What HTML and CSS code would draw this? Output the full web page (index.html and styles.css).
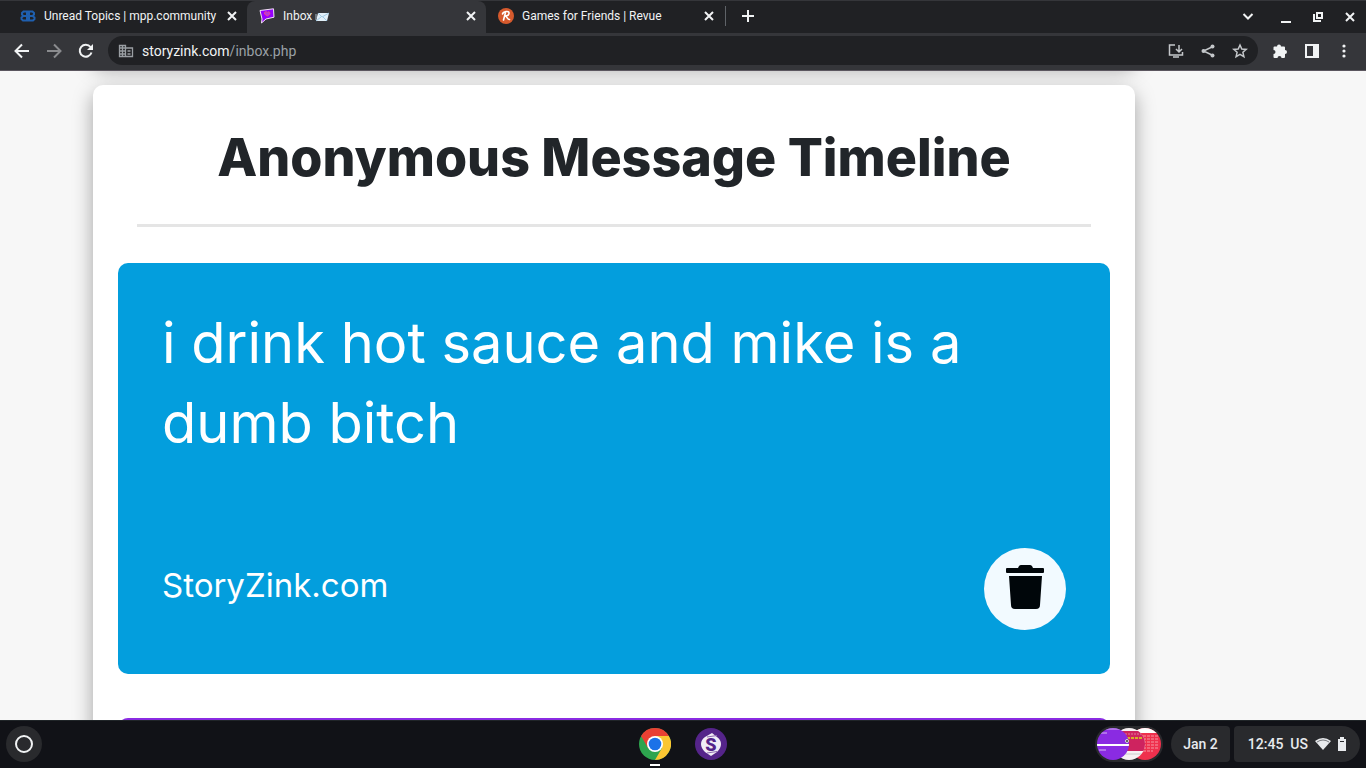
FILE: index.html
```html
<!DOCTYPE html>
<html lang="en">
<head>
    <meta charset="UTF-8">
    <meta name="viewport" content="width=device-width, initial-scale=1.0">
    <title>Inbox</title>
    <link rel="stylesheet" href="styles.css">
</head>
<body>
    <header class="browser">
        <div class="tab-strip">
            <div class="tab">
                <svg class="favicon" viewBox="0 0 16 16" fill="none" stroke="#1f5fae" stroke-width="2">
                    <path d="M7 3.500H3.500L2 5v1.500L3.500 8 1.500 9.500V11L3 12.500h4zM3.500 8H7M9 3.500h3.500L14 5v1.500L12.500 8l2 1.500V11L13 12.500H9zM12.500 8H9"/>
                </svg>
                <span class="tab-title">Unread Topics | mpp.community</span>
                <button class="tab-close" aria-label="Close tab"><svg viewBox="0 0 16 16"><path d="M4 4l8 8M12 4l-8 8"/></svg></button>
            </div>
            <div class="tab tab-active">
                <svg class="favicon" viewBox="0 0 16 16">
                    <path d="M1 2.500L14.500 .8l.5 8.400-8 1.800L2.500 15l.5-4z" fill="#9500ff" stroke="#f3e3f5" stroke-linejoin="round"/>
                    <path d="M8.500 8L5.500 6C5 3.500 7.500 3 8.300 4.500c1-1.500 3-.500 2.500 1.500z" fill="#b23ae0" stroke="#f1438b"/>
                </svg>
                <span class="tab-title">Inbox
                    <svg class="envelope" viewBox="0 0 14 12">
                        <path d="M3 2h11l-2 8H1z" fill="#e2eff8"/>
                        <path d="M3 2l4 4 7-4M1 10l5-4M12 10L8 6" fill="none" stroke="#8fc0de" stroke-width=".8"/>
                        <path d="M0 4h2M0 6h2M0 8h1" stroke="#a6b8c6"/>
                    </svg>
                </span>
                <button class="tab-close" aria-label="Close tab"><svg viewBox="0 0 16 16"><path d="M4 4l8 8M12 4l-8 8"/></svg></button>
            </div>
            <div class="tab">
                <svg class="favicon" viewBox="0 0 16 16">
                    <circle cx="8" cy="8" r="8" fill="#d65a2d"/>
                    <path d="M4.500 6C5 3.500 11.500 2 11 5.500 10.800 7.500 8.500 8 7 8c2 0 2.500 4 4.500 3.500M7.500 4.500L5.500 12" fill="none" stroke="#fff" stroke-width="1.600" stroke-linecap="round"/>
                </svg>
                <span class="tab-title">Games for Friends | Revue</span>
                <button class="tab-close" aria-label="Close tab"><svg viewBox="0 0 16 16"><path d="M4 4l8 8M12 4l-8 8"/></svg></button>
            </div>
            <div class="tab-separator"></div>
            <button class="new-tab" aria-label="New tab"><svg viewBox="0 0 16 16"><path d="M8 2v12M2 8h12"/></svg></button>
            <div class="window-controls">
                <button aria-label="Search tabs"><svg viewBox="0 0 16 16"><path d="M3.500 5L8 9.500 12.500 5"/></svg></button>
                <button aria-label="Minimize"><svg viewBox="0 0 16 16"><path d="M3 13h10"/></svg></button>
                <button aria-label="Restore"><svg viewBox="0 0 16 16"><path d="M7 4h5v5H7zM4 5v7h7"/></svg></button>
                <button aria-label="Close window"><svg viewBox="0 0 16 16"><path d="M4 4l8 8M12 4l-8 8"/></svg></button>
            </div>
        </div>
        <div class="toolbar">
            <div class="nav-buttons">
                <button aria-label="Back"><svg viewBox="0 0 16 16"><path d="M15 8H2M8 1.500L1.500 8 8 14.500"/></svg></button>
                <button class="dim" aria-label="Forward"><svg viewBox="0 0 16 16"><path d="M1 8h13M8 1.500L14.500 8 8 14.500"/></svg></button>
                <button aria-label="Reload"><svg viewBox="0 0 16 16"><path d="M13.500 9.500A6 6 0 1 1 12.500 4"/><path d="M15 1v6H9z" fill="#f1f3f4" stroke="none"/></svg></button>
            </div>
            <div class="address-bar">
                <svg viewBox="0 0 16 16" fill="none" stroke="#9a9ea3" stroke-width="1.300">
                    <path d="M1.500 2.500h6v11h-6zM7.500 5h7v8.500h-7M4.500 2.500v11M1.500 5h6M1.500 8h6M1.500 11h6M9.500 8h3M9.500 11h3"/>
                </svg>
                <div class="url" role="textbox" aria-label="Address" tabindex="0">storyzink.com<span>/inbox.php</span></div>
                <button aria-label="Install"><svg viewBox="0 0 16 16"><path d="M7 2H1.500v10h13V9M5 14h6M11 2v7M8 6l3 3 3-3"/></svg></button>
                <button aria-label="Share"><svg viewBox="0 0 16 16"><path d="M13 3.500L3.500 8l9.500 4.500"/><g fill="#c4c7ca" stroke="none"><circle cx="12.500" cy="3.500" r="2"/><circle cx="3.500" cy="8" r="2"/><circle cx="12.500" cy="12.500" r="2"/></g></svg></button>
                <button aria-label="Bookmark"><svg viewBox="0 0 16 16"><path d="M8 2l1.800 4 4.400.400-3.300 2.900 1 4.300L8 11.300l-3.900 2.300 1-4.300-3.300-2.900 4.400-.400z"/></svg></button>
            </div>
            <div class="tool-buttons">
                <button aria-label="Extensions"><svg viewBox="0 0 16 16"><path d="M2.500 3.500H5a2 2 0 1 1 4 0h3q1 0 1 1V7a2 2 0 1 1 0 4v3q0 1-1 1H9.500a2 2 0 0 0-4 0h-3q-1 0-1-1v-3a2 2 0 0 0 0-4V4.500q0-1 1-1z" fill="#f1f3f4" stroke="none"/></svg></button>
                <button aria-label="Side panel"><svg viewBox="0 0 16 16"><path d="M2 2h12v12H2z"/><path d="M10 2h4v12h-4z" fill="#f1f3f4"/></svg></button>
                <button aria-label="Menu"><svg viewBox="0 0 16 16"><g fill="#f1f3f4" stroke="none"><circle cx="8" cy="3" r="1.600"/><circle cx="8" cy="8" r="1.600"/><circle cx="8" cy="13" r="1.600"/></g></svg></button>
            </div>
        </div>
    </header>

    <main class="page">
        <section class="card card-previous"></section>
        <section class="card">
            <h1>Anonymous Message Timeline</h1>
            <hr>
            <article class="message">
                <p class="message-text">i drink hot sauce and mike is a dumb bitch</p>
                <div class="message-footer">
                    <span class="site-name">StoryZink.com</span>
                    <button class="delete" aria-label="Delete message">
                        <svg viewBox="0 0 40 46">
                            <path d="M2 4h11l1-2q1-1 2-1h9q1 0 2 1l1 2h10q1 0 1 1v3q0 1-1 1H2q-1 0-1-1V5q0-1 1-1zM4 12h33l-2 29q0 4-4 4H10q-4 0-4-4z"/>
                        </svg>
                    </button>
                </div>
            </article>
            <article class="message message-purple"></article>
        </section>
    </main>

    <footer class="shelf">
        <button class="launcher" aria-label="Launcher"></button>
        <div class="apps">
            <button class="app running" aria-label="Chrome">
                <svg viewBox="0 0 32 32">
                    <circle cx="16" cy="16" r="16" fill="#2da44e"/>
                    <path d="M16 16L2.140 8A16 16 0 0 1 29.860 8z" fill="#e94033"/>
                    <path d="M16 8h13.860A16 16 0 0 1 16 32l7-12z" fill="#fbc632"/>
                    <path d="M2.140 8L9 20l7-12z" fill="#e94033"/>
                    <circle cx="16" cy="16" r="8" fill="#fff"/>
                    <circle cx="16" cy="16" r="6.300" fill="#1b72e8"/>
                </svg>
            </button>
            <button class="app" aria-label="StoryZink">
                <svg viewBox="0 0 32 32">
                    <circle cx="16" cy="16" r="16" fill="#55248a"/>
                    <path d="M17 5l5 4q4 3 4 7t-4 8l-6 4-6-4q-4-4-4-8t4-7z" fill="#f1ecf6"/>
                    <path d="M12 9l10-1.500M12 25l10-1.500" stroke="#8b6aad" stroke-width="1"/>
                    <text x="16" y="22.500" text-anchor="middle">S</text>
                </svg>
            </button>
        </div>
        <div class="status">
            <button class="holding" aria-label="Recent captures">
                <svg viewBox="0 0 68 36">
                    <defs>
                        <clipPath id="left"><circle cx="18" cy="18" r="16"/></clipPath>
                        <clipPath id="middle"><circle cx="34" cy="18" r="16"/></clipPath>
                        <clipPath id="right"><circle cx="50" cy="18" r="16"/></clipPath>
                    </defs>
                    <g clip-path="url(#right)">
                        <path d="M30 0h38v36H30z" fill="#ef304d"/><path d="M30 0h38v7H30z" fill="#fff"/>
                        <path d="M48 10h16M48 13h16M48 16h16M48 19h16M48 22h16M48 25h10" stroke="#f598a5" stroke-dasharray="3 1"/>
                    </g>
                    <g clip-path="url(#middle)">
                        <path d="M16 0h36v36H16z" fill="#f7f1f3"/><path d="M16 5h36v20H16z" fill="#ce235f"/>
                        <path d="M32 12h16" stroke="#d8ae28" stroke-width="2" stroke-dasharray="3 1"/>
                        <path d="M30 8h16" stroke="#e47a9e" stroke-dasharray="2 1"/><path d="M16 28h36" stroke="#ccc"/>
                    </g>
                    <g clip-path="url(#left)">
                        <path d="M0 0h36v36H0z" fill="#8a2be2"/><path d="M0 19h36" stroke="#fff" stroke-width="2"/>
                        <path d="M6 7h6M4 24h7M0 3h36" stroke="#d7b7f4"/>
                    </g>
                    <circle cx="32" cy="15" r="1.500" fill="#333" stroke="#ddd"/>
                </svg>
            </button>
            <button class="date">Jan 2</button>
            <button class="tray">
                <span>12:45</span><span>US</span>
                <svg viewBox="0 0 16 16"><path d="M0 5q8-6 16 0L8 14z" fill="#e8eaed"/><path d="M2 6q6-4 12 0" fill="none" stroke="#77797d"/></svg>
                <svg class="battery" viewBox="0 0 8 16"><path d="M2 1h4v2h2v12H0V3h2z" fill="#e8eaed"/><path d="M2 5h4v1H2z" fill="#292a2d"/></svg>
            </button>
        </div>
    </footer>
</body>
</html>
```
FILE: styles.css
```css
* {
    box-sizing: border-box;
}
body {
    display: flex;
    flex-direction: column;
    height: 100vh;
    margin: 0;
    overflow: hidden;
    font-family: Roboto, sans-serif;
    background: #f7f7f7;
}
button {
    display: flex;
    align-items: center;
    justify-content: center;
    padding: 0;
    border: 0;
    background: none;
    color: inherit;
    font: inherit;
}
button svg {
    width: 16px;
    height: 16px;
    fill: none;
    stroke: #f1f3f4;
    stroke-width: 2;
}

/* Browser */
.browser {
    flex: none;
    background: #35363a;
    border-bottom: 1px solid #5b565f;
    color: #f1f3f4;
}
.tab-strip {
    display: flex;
    height: 33px;
    background: #202124;
    border-top: 1px solid #35363a;
}
.tab {
    display: flex;
    align-items: center;
    width: 239px;
    padding: 0 8px 2px 12px;
    font-size: 12px;
}
.tab:first-child {
    width: 247px;
    padding: 0 7px 2px 20px;
}
.tab-active {
    padding-right: 7px;
    background: #35363a;
    border-radius: 8px 8px 0 0;
}
.tab-separator {
    width: 1px;
    height: 20px;
    margin-top: 5px;
    background: #5f6368;
}
.favicon {
    flex: none;
    width: 16px;
    height: 16px;
    margin-right: 8px;
}
.tab-title {
    flex: 1;
    white-space: nowrap;
}
.envelope {
    width: 14px;
    height: 12px;
    vertical-align: middle;
}
.new-tab {
    width: 44px;
    height: 30px;
}
.window-controls {
    display: flex;
    margin-left: auto;
    padding-right: 8px;
    gap: 16px;
}
.window-controls button:first-child {
    margin-right: 6px;
}
.toolbar {
    display: flex;
    align-items: center;
    height: 37px;
    padding: 0 14px 2px;
}
.nav-buttons,
.tool-buttons {
    display: flex;
    gap: 16px;
}
.dim {
    opacity: 0.45;
}
.address-bar {
    display: flex;
    align-items: center;
    flex: 1;
    gap: 16px;
    height: 29px;
    margin: 0 14px;
    padding: 0 10px;
    border-radius: 15px;
    background: #202124;
}
.address-bar > svg {
    width: 16px;
    height: 16px;
    margin-right: -8px;
}
.address-bar button svg {
    stroke: #c4c7ca;
    stroke-width: 1.5;
}
.url {
    flex: 1;
    font-size: 14px;
}
.url span {
    color: #9aa0a6;
}

/* Inbox */
.page {
    flex: 1;
    min-height: 0;
    padding: 0 231px 0 93px;
    overflow: hidden;
}
.card {
    padding: 40px 25px;
    border-radius: 10px;
    background: #fff;
    box-shadow: 0 8px 20px rgba(0, 0, 0, 0.35);
}
.card-previous {
    height: 60px;
    margin: -70px 0 24px;
    padding: 0;
}
h1 {
    margin: 0;
    color: #212529;
    font: 800 52px/66px Inter, sans-serif;
    text-align: center;
}
hr {
    height: 3px;
    margin: 33px 19px 36px;
    border: 0;
    background: #e5e5e5;
}
.message {
    padding: 40px 44px 44px;
    border-radius: 10px;
    background: #039edd;
    color: #fff;
    font-family: Inter, sans-serif;
}
.message-text {
    margin: 0 0 85px;
    font-size: 56px;
    line-height: 80px;
}
.message-footer {
    display: flex;
    align-items: flex-start;
    justify-content: space-between;
}
.site-name {
    font-size: 33px;
    line-height: 74px;
}
.delete {
    width: 82px;
    height: 82px;
    padding-bottom: 4px;
    border-radius: 50%;
    background: #f2faff;
}
.delete svg {
    width: 40px;
    height: 46px;
    fill: #00060a;
    stroke: none;
}
.message-purple {
    height: 400px;
    margin-top: 44px;
    background: #8a2be2;
}

/* Shelf */
.shelf {
    display: grid;
    grid-template-columns: 1fr auto 1fr;
    align-items: center;
    flex: none;
    height: 48px;
    padding: 0 6px 1px;
    border-top: 1px solid #202528;
    background: #111217;
    color: #e8eaed;
}
.launcher {
    width: 36px;
    height: 36px;
    border-radius: 50%;
    background: #292a2d;
}
.launcher::before {
    content: "";
    width: 14px;
    height: 14px;
    border: 2px solid #f1f3f4;
    border-radius: 50%;
}
.apps {
    display: flex;
    gap: 24px;
}
.app {
    position: relative;
}
.app svg {
    width: 32px;
    height: 32px;
    stroke: none;
}
.app text {
    fill: #55248a;
    font: 900 18px Roboto, sans-serif;
}
.running::after {
    content: "";
    position: absolute;
    bottom: -6px;
    width: 10px;
    height: 2px;
    background: #fff;
}
.status {
    display: flex;
    justify-content: flex-end;
    font-size: 14px;
    font-weight: 500;
}
.holding {
    margin-right: 8px;
    border-radius: 18px;
    background: #292a2d;
}
.holding svg {
    width: 68px;
    height: 36px;
    stroke: none;
    stroke-width: 1;
}
.date,
.tray {
    height: 36px;
    background: #292a2d;
}
.date {
    margin-right: 4px;
    padding: 0 12px;
    border-radius: 18px 4px 4px 18px;
}
.tray {
    gap: 7px;
    padding: 0 14px;
    border-radius: 4px 18px 18px 4px;
}
.tray svg {
    stroke: none;
    stroke-width: 1;
}
.tray .battery {
    width: 8px;
}
```
